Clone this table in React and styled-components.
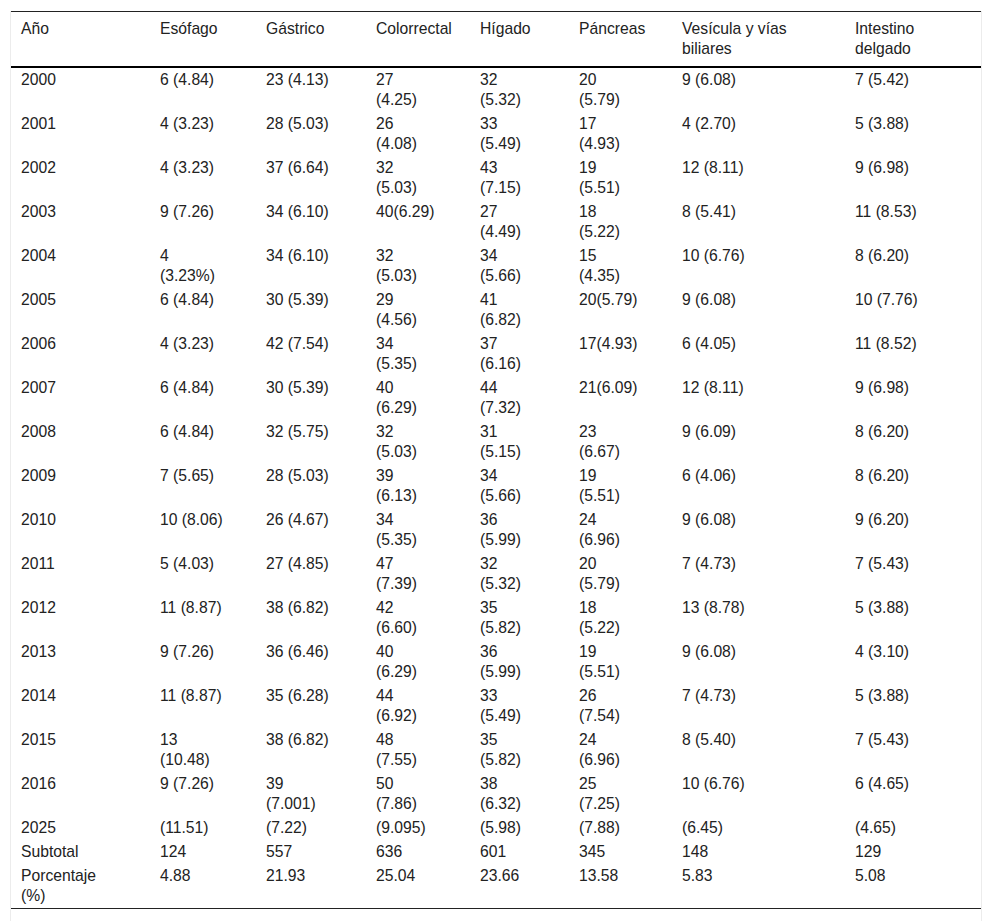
import React from "react";
import styled, { createGlobalStyle } from "styled-components";

const Global = createGlobalStyle`
  html, body { margin: 0; padding: 0; background: #fff; }
  body { font-family: "Liberation Sans", Arial, sans-serif; color: #222; }
`;

const Wrapper = styled.div`
  margin: 11px 10px 0 10px;
  border-left: 1px solid #ececec;
  border-right: 1px solid #ececec;
  padding-bottom: 12px;
`;

const Table = styled.table`
  width: 100%;
  border-collapse: collapse;
  table-layout: fixed;
  font-size: 15.7px;
  line-height: 20px;
  border-top: 1px solid #222;
  border-bottom: 1px solid #222;
`;

const HeadCell = styled.th`
  text-align: left;
  font-weight: normal;
  vertical-align: top;
  padding: 7px 10px;
  white-space: pre-line;
  border-bottom: 2px solid #000;
`;

const Cell = styled.td`
  text-align: left;
  vertical-align: top;
  padding: 2px 10px;
  white-space: pre-line;
`;

const widths = [139, 106, 110, 104, 99, 103, 173, null];

const headers = [
  "Año",
  "Esófago",
  "Gástrico",
  "Colorrectal",
  "Hígado",
  "Páncreas",
  "Vesícula y vías\nbiliares",
  "Intestino\ndelgado",
];

const rows = [
  ["2000", "6 (4.84)", "23 (4.13)", "27\n(4.25)", "32\n(5.32)", "20\n(5.79)", "9 (6.08)", "7 (5.42)"],
  ["2001", "4 (3.23)", "28 (5.03)", "26\n(4.08)", "33\n(5.49)", "17\n(4.93)", "4 (2.70)", "5 (3.88)"],
  ["2002", "4 (3.23)", "37 (6.64)", "32\n(5.03)", "43\n(7.15)", "19\n(5.51)", "12 (8.11)", "9 (6.98)"],
  ["2003", "9 (7.26)", "34 (6.10)", "40(6.29)", "27\n(4.49)", "18\n(5.22)", "8 (5.41)", "11 (8.53)"],
  ["2004", "4\n(3.23%)", "34 (6.10)", "32\n(5.03)", "34\n(5.66)", "15\n(4.35)", "10 (6.76)", "8 (6.20)"],
  ["2005", "6 (4.84)", "30 (5.39)", "29\n(4.56)", "41\n(6.82)", "20(5.79)", "9 (6.08)", "10 (7.76)"],
  ["2006", "4 (3.23)", "42 (7.54)", "34\n(5.35)", "37\n(6.16)", "17(4.93)", "6 (4.05)", "11 (8.52)"],
  ["2007", "6 (4.84)", "30 (5.39)", "40\n(6.29)", "44\n(7.32)", "21(6.09)", "12 (8.11)", "9 (6.98)"],
  ["2008", "6 (4.84)", "32 (5.75)", "32\n(5.03)", "31\n(5.15)", "23\n(6.67)", "9 (6.09)", "8 (6.20)"],
  ["2009", "7 (5.65)", "28 (5.03)", "39\n(6.13)", "34\n(5.66)", "19\n(5.51)", "6 (4.06)", "8 (6.20)"],
  ["2010", "10 (8.06)", "26 (4.67)", "34\n(5.35)", "36\n(5.99)", "24\n(6.96)", "9 (6.08)", "9 (6.20)"],
  ["2011", "5 (4.03)", "27 (4.85)", "47\n(7.39)", "32\n(5.32)", "20\n(5.79)", "7 (4.73)", "7 (5.43)"],
  ["2012", "11 (8.87)", "38 (6.82)", "42\n(6.60)", "35\n(5.82)", "18\n(5.22)", "13 (8.78)", "5 (3.88)"],
  ["2013", "9 (7.26)", "36 (6.46)", "40\n(6.29)", "36\n(5.99)", "19\n(5.51)", "9 (6.08)", "4 (3.10)"],
  ["2014", "11 (8.87)", "35 (6.28)", "44\n(6.92)", "33\n(5.49)", "26\n(7.54)", "7 (4.73)", "5 (3.88)"],
  ["2015", "13\n(10.48)", "38 (6.82)", "48\n(7.55)", "35\n(5.82)", "24\n(6.96)", "8 (5.40)", "7 (5.43)"],
  ["2016", "9 (7.26)", "39\n(7.001)", "50\n(7.86)", "38\n(6.32)", "25\n(7.25)", "10 (6.76)", "6 (4.65)"],
  ["2025", "(11.51)", "(7.22)", "(9.095)", "(5.98)", "(7.88)", "(6.45)", "(4.65)"],
  ["Subtotal", "124", "557", "636", "601", "345", "148", "129"],
  ["Porcentaje\n(%)", "4.88", "21.93", "25.04", "23.66", "13.58", "5.83", "5.08"],
];

export default function App() {
  return (
    <>
      <Global />
      <Wrapper>
        <Table>
          <colgroup>
            {widths.map((w, i) => (
              <col key={i} style={w ? { width: w } : undefined} />
            ))}
          </colgroup>
          <thead>
            <tr>
              {headers.map((h) => (
                <HeadCell key={h}>{h}</HeadCell>
              ))}
            </tr>
          </thead>
          <tbody>
            {rows.map((r) => (
              <tr key={r[0]}>
                {r.map((c, i) => (
                  <Cell key={i}>{c}</Cell>
                ))}
              </tr>
            ))}
          </tbody>
        </Table>
      </Wrapper>
    </>
  );
}
